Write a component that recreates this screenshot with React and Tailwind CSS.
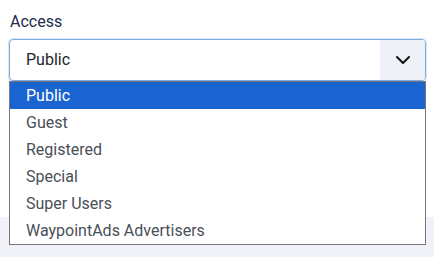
import React, { useState } from 'react';

const options = ['Public', 'Guest', 'Registered', 'Special', 'Super Users', 'WaypointAds Advertisers'];

function App() {
    const [selected, setSelected] = useState('Public');
    const [hovered, setHovered] = useState('Public');

    return (
        <div className="w-[434px] h-[257px] bg-[#f0f2f8] font-['Roboto',sans-serif] overflow-hidden">
            <div className="bg-white h-[217px] pt-[12px] pl-[9px] pr-[8px]">
                <label className="block pl-[1px] text-[16px] leading-[19px] text-[#1c2b4a]">Access</label>
                <div className="relative mt-[8px]">
                    <div className="flex h-[42px] rounded-[4px] border border-[#7fa9e3] shadow-[0_0_0_1px_#dbe7f7] overflow-hidden">
                        <div className="flex-1 flex items-center pl-[16px] text-[16px] text-[#22262a]">{selected}</div>
                        <div className="w-[45px] bg-[#eef0f7] flex items-center justify-center">
                            <svg width="16" height="10" viewBox="0 0 16 10" fill="none">
                                <path d="M2 2l6 6 6-6" stroke="#111" strokeWidth="2" strokeLinecap="round" strokeLinejoin="round" />
                            </svg>
                        </div>
                    </div>
                    <ul className="absolute left-0 top-[42px] w-[417px] bg-white border border-[#767676] z-10">
                        {options.map(opt => (
                            <li
                                key={opt}
                                onMouseEnter={() => setHovered(opt)}
                                onClick={() => setSelected(opt)}
                                className={`h-[27px] flex items-center pl-[16px] text-[16px] ${hovered === opt ? 'bg-[#1a64d1] text-white' : 'text-[#495057]'}`}
                            >
                                {opt}
                            </li>
                        ))}
                    </ul>
                </div>
            </div>
        </div>
    );
}

export default App;
